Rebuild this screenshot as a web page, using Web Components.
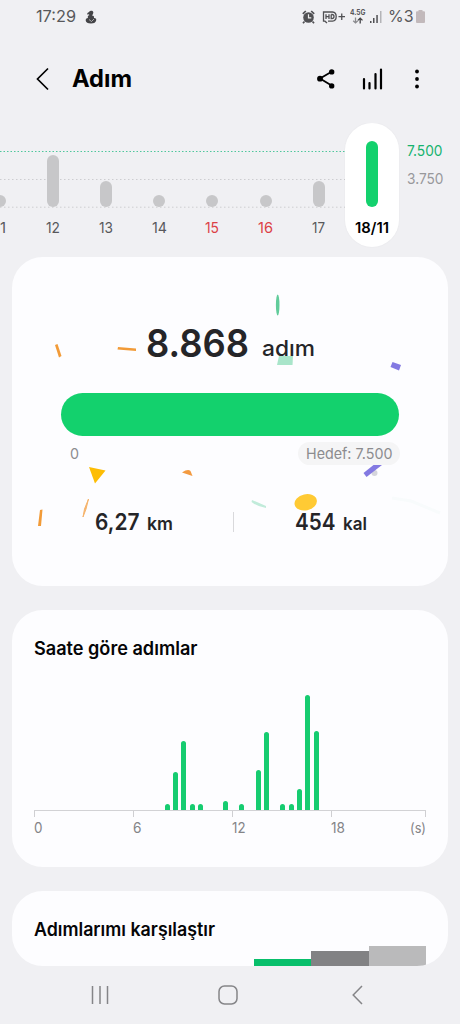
<!DOCTYPE html>
<html lang="tr">
<head>
<meta charset="utf-8">
<title>Adım</title>
<style>
html,body{margin:0;padding:0}
body{width:460px;height:1024px;overflow:hidden;background:#f0f0f3;font-family:Inter,"Noto Sans",sans-serif;color:#000}
</style>
</head>
<body>
<steps-app></steps-app>
<script>
const define = (name, html, setup) => customElements.define(name, class extends HTMLElement {
  connectedCallback() {
    if (this.shadowRoot) return;
    const root = this.attachShadow({ mode: 'open' });
    root.innerHTML = typeof html === 'function' ? html(this) : html;
    if (setup) setup(this, root);
  }
});

define('status-bar', `
<style>
:host{display:flex;height:33px;align-items:center;padding:0 35px 0 36px;box-sizing:border-box;color:#58585b;font-size:16.5px;line-height:33px}
svg{display:block;flex:none}
.gap{flex:1}
.net{display:flex;flex-direction:column;align-items:center;margin:0 4px 0 4px;width:16px}
.net b{font-size:7.5px;line-height:8px;height:8px}
</style>
<fit-text w="40">17:29</fit-text>
<svg width="12" height="14" viewBox="0 0 12 14" style="margin-left:8.500px" fill="#444447"><path d="M4 2Q5 .3 7 .8Q9 1.5 8 4L7 5.5Q9.500 5.800 9 8Q12 8 11 11Q10 13.500 6 13.500Q1 13.500 .7 10.500Q.5 8 3 8Q2 6 4.500 5L3.500 4.200L2 4.500L2.500 3Z"/><path d="M4 9.500L6.500 11.500L9 9" fill="none" stroke="#ddd" stroke-width=".7"/></svg>
<span class="gap"></span>
<svg width="13" height="14" viewBox="0 0 13 14"><circle cx="6.500" cy="7.500" r="5.300" fill="#505053"/><path d="M.8 3.800L3.800 1M12.200 3.800L9.200 1M2.500 11.500L1 13.300M10.500 11.500L12 13.300" stroke="#505053" stroke-width="1.700"/><path d="M6.500 4.300V7.800H9.300" fill="none" stroke="#eee" stroke-width="1.200"/></svg>
<svg width="24" height="14" viewBox="0 0 24 14" style="margin-left:7px" fill="none" stroke="#505053" stroke-width="1.300"><path d="M3.500 11.200H1.500V2H10.500Q14.200 2.200 14.200 6.500T10.500 11.200H6M4 4.200V9M4 6.600H7M7 4.200V9M9.200 4.500V8.700H10Q12 8.700 12 6.600T10 4.500H9.200M3 11.200L5 13M16.500 6.700H23M19.750 3.500V10"/></svg>
<div class="net"><b><fit-text w="15.500">4.5G</fit-text></b>
<svg width="12" height="7" viewBox="0 0 12 7" fill="none" stroke-width="1.300"><path d="M3.500 .5V5.500M1.200 3.700L3.500 5.900L5.800 3.700" stroke="#8b8b8e"/><path d="M8.200 6.500V1.500M5.900 3.400L8.200 1.200L10.500 3.400" stroke="#444447"/></svg></div>
<svg width="12" height="13" viewBox="0 0 12 13" fill="#505053"><path d="M0 11h1.500v2H0zM3 8h1.500v5H3zM6.300 5h1.500v8H6.300z"/><path d="M10 1h1.500v12H10z" fill="#b4b4b7"/></svg>
<fit-text w="25.500" style="margin-left:6px">%3</fit-text>
<svg width="9" height="13" viewBox="0 0 9 13" style="margin-left:3px"><path d="M2.500 0h4v1.200H8Q9 1.300 9 2.300V12Q9 13 8 13H1Q0 13 0 12V2.300Q0 1.300 1 1.200H2.500Z" fill="#c2b9bb"/></svg>
`);

define('app-header', `
<style>
:host{display:flex;height:92px;align-items:center;padding:0 40.500px 0 36px;box-sizing:border-box;font-size:24px;line-height:30px;font-weight:700}
svg{display:block;flex:none}
.gap{flex:1}
</style>
<svg width="14" height="24" viewBox="0 0 14 24" fill="none" stroke="#000" stroke-width="1.700"><path d="M12 1.500L1.500 12L12 22.500"/></svg>
<fit-text w="60" style="margin-left:22px"><slot></slot></fit-text>
<span class="gap"></span>
<svg width="18" height="20" viewBox="0 0 18 20"><path d="M15 2.500L3 9.500L15 16.800" fill="none" stroke="#000" stroke-width="1.800"/><circle cx="14.700" cy="2.900" r="2.700"/><circle cx="3" cy="9.700" r="2.900"/><circle cx="14.700" cy="16.900" r="2.700"/></svg>
<svg width="22" height="22" viewBox="0 0 22 22" style="margin-left:27.500px" stroke="#000" stroke-width="2.200" stroke-linecap="round"><path d="M2 11V20.500M7.500 15V20.500M13.500 6V20.500M19 1.500V20.500"/></svg>
<svg width="6" height="20" viewBox="0 0 6 20" style="margin-left:29.500px"><circle cx="3" cy="2.500" r="1.900"/><circle cx="3" cy="10" r="1.900"/><circle cx="3" cy="17.500" r="1.900"/></svg>
`);

define('day-bar', el => `
<style>
:host{display:flex;flex-direction:column;align-items:center;justify-content:flex-end;box-sizing:border-box;width:53.140px;height:124px;flex:none;font-size:15px;line-height:20px;color:#58585b;padding-bottom:9px}
:host([off]){color:#dc4146}
:host([sel]){background:#fff;border-radius:27px;color:#000;font-weight:600;width:54px;box-shadow:0 0 2px rgba(0,0,0,.05)}
:host([edge]) fit-text{margin-left:6px}
i{width:12px;border-radius:6px;background:#c7c7c9;height:${el.getAttribute('h')}px;margin-bottom:11px}
:host([sel]) i{background:#13d16d}
</style><i></i><fit-text w="${el.getAttribute('w') || 14}"><slot></slot></fit-text>`);

define('week-chart', `
<style>
:host{display:flex;height:132px;position:relative;overflow:hidden}
.lines{position:absolute;left:0;top:0;z-index:-1}
.days{display:flex;margin-left:-26.600px}
.goals{display:flex;flex-direction:column;gap:8px;margin:18px 0 0 8px;font-size:15px;line-height:20px;color:#98989b}
.goals :first-child{color:#16b36e}
</style>
<svg class="lines" width="346" height="124" fill="none" stroke-width="1"><path d="M0 28.500H346" stroke="#4fc79c" stroke-dasharray="1.500 2"/><path d="M0 56.500H346M0 84.200H346" stroke="#cdcdd0" stroke-dasharray="1.500 2.500"/></svg>
<div class="days">
<day-bar h="12.500" w="6" edge>1</day-bar><day-bar h="52">12</day-bar><day-bar h="26">13</day-bar><day-bar h="12.500" w="15">14</day-bar><day-bar h="12.500" off>15</day-bar><day-bar h="12.500" w="15" off>16</day-bar><day-bar h="26" w="13">17</day-bar><day-bar h="66" w="34" sel>18/11</day-bar>
</div>
<div class="goals"><fit-text w="35.500">7.500</fit-text><fit-text w="36.500">3.750</fit-text></div>
`);

define('ui-card', `
<style>
:host{display:block;box-sizing:border-box;margin:0 12px;background:#fdfdff;border-radius:31px;position:relative;z-index:0;overflow:hidden}
</style><slot></slot>`);

define('confetti-layer', `
<style>:host{position:absolute;inset:0;z-index:-1}svg{display:block}</style>
<svg width="436" height="329" viewBox="12 257 436 329">
<path d="M55 345L57.500 344L61.500 356L59 357.500Z" fill="#f29b38"/>
<path d="M118 347L136 348.500V351L117.500 349.500Z" fill="#f29b38"/>
<ellipse cx="277.700" cy="305" rx="1.800" ry="10.500" fill="#61cc9b"/>
<path d="M279 356H293L292.500 365H277Z" fill="#a9e5ca"/>
<path d="M392.500 362L401 365L399 370.500L390.500 367Z" fill="#8379e2"/>
<path d="M89 467L105.500 470.500L95 483.500Z" fill="#fdbd05"/>
<path d="M182 472.500Q188 468.500 190.500 471L192.500 476Z" fill="#f39a40"/>
<path d="M88.500 499L86 509L83 517L84.500 509Z" fill="#f5b36c" stroke="#f5b36c"/>
<path d="M40 510L42.500 509.500L41 526H38Z" fill="#f29b38"/>
<path d="M252 500L266 506V508Q257 506.500 251.500 502Z" fill="#c1ebda"/>
<ellipse cx="305.700" cy="502.300" rx="11.300" ry="8" transform="rotate(-12 305.700 502.300)" fill="#ffca34"/>
<circle cx="374.500" cy="473" r="3" fill="#d5d5dc"/>
<path d="M363.500 473L373.500 465H382L366.500 477Z" fill="#8379e2"/>
<path d="M392 498L411 501L440 513" fill="none" stroke="#f8fbfc" stroke-width="3"/>
</svg>`);

define('step-summary', `
<style>
:host{display:block;height:328.500px;color:#252528;box-sizing:border-box;padding:66px 49px 0}
.total{display:flex;height:40px;width:170px;margin-left:84.500px;align-items:flex-end}
.n{font-size:38px;line-height:40px;font-weight:600}
.u{font-size:22px;line-height:29px;font-weight:500;margin-left:13.500px}
.bar{height:43px;border-radius:22px;background:#13d16d;margin-top:30px}
.scale{display:flex;justify-content:space-between;font-size:15px;line-height:23px;color:#8c8c8f;margin-top:6px;padding-left:9px}
.goal{background:#f5f5f6;border-radius:12px;height:23px;padding:0 8px 0 7.500px;margin-right:-1px}
.stats{display:flex;align-items:center;height:30px;margin-top:42px;padding-left:34px;font-weight:600}
.stat{display:flex;align-items:flex-end;font-size:22.500px;line-height:30px;gap:7px}
.stat :last-child{font-size:17.500px;line-height:27px}
hr{width:1px;height:20px;border:0;margin:0 61px 0 60.500px;background:#d9d9dc}
</style>
<confetti-layer></confetti-layer>
<div class="total"><fit-text class="n" w="103">8.868</fit-text><fit-text class="u" w="53">adım</fit-text></div>
<div class="bar"></div>
<div class="scale"><fit-text w="9">0</fit-text><div class="goal"><fit-text w="86.500">Hedef: 7.500</fit-text></div></div>
<div class="stats"><div class="stat"><fit-text w="44.500">6,27</fit-text><fit-text w="26">km</fit-text></div><hr><div class="stat"><fit-text w="40.500">454</fit-text><fit-text w="24">kal</fit-text></div></div>
`);

define('hour-chart', `
<style>
:host{display:block;margin:30px 22px 0 21.500px}
.plot{display:grid;grid-template-columns:repeat(47,8.270px);height:120px;align-items:end;border-bottom:1px solid #d2d2d5}
i{width:5px;margin-left:-1px;border-radius:2.500px 2.500px 0 0;background:#16cc70}
.ticks,.labels{display:grid;grid-template-columns:99px 99.300px 99px 1fr}
.ticks{height:5.500px;border-right:1px solid #cfcfd2}
.ticks b{border-left:1px solid #cfcfd2}
.labels{font-size:14px;line-height:20px;color:#848487;margin-top:1.500px}
.last{display:flex;justify-content:space-between}
</style>
<div class="plot"></div>
<div class="ticks"><b></b><b></b><b></b><b></b></div>
<div class="labels"><fit-text w="8.500">0</fit-text><fit-text w="8.500">6</fit-text><fit-text w="13.500">12</fit-text><div class="last"><fit-text w="14">18</fit-text><fit-text w="16">(s)</fit-text></div></div>
`, (el, root) => {
  const steps = {16:6.5,17:38.5,18:69.5,19:6.5,20:6.5,23:9.5,25:6.5,27:40.5,28:78,30:6.5,31:6.5,32:21.5,33:115.5,34:79.5};
  root.querySelector('.plot').innerHTML = Object.entries(steps).map(([slot, h]) => `<i style="grid-row:1;grid-column:${+slot + 1};height:${h}px"></i>`).join('');
});

define('card-title', el => `
<style>:host{display:block;padding:26px 0 0 22px;font-size:18.500px;line-height:24px;font-weight:600;color:#050507}</style>
<fit-text w="${el.getAttribute('w')}"><slot></slot></fit-text>`);

define('compare-bars', `
<style>
:host{display:flex;align-items:flex-end;justify-content:flex-end;height:25px;padding-right:22px}
i{width:57.500px}
</style><i style="height:7px;background:#08bf6b"></i><i style="height:15.500px;background:#828284"></i><i style="height:20px;background:#bababb"></i>`);

define('nav-bar', `
<style>
:host{display:flex;height:58px;align-items:center;padding:0 97px 0 91px;justify-content:space-between}
svg{display:block}
.home{margin-left:-5px}
</style>
<svg width="18" height="20" viewBox="0 0 18 20" stroke="#858588" stroke-width="1.500"><path d="M1.500 1V19M9 1V19M16.500 1V19"/></svg>
<svg class="home" width="20" height="20" viewBox="0 0 20 20" fill="none" stroke="#858588" stroke-width="1.500"><rect x="1" y="1" width="18" height="18" rx="5.500"/></svg>
<svg width="11" height="20" viewBox="0 0 11 20" fill="none" stroke="#858588" stroke-width="1.500"><path d="M10 1L1.200 10L10 19"/></svg>
`);

define('steps-app', `
<style>
:host{display:flex;flex-direction:column;width:460px;height:1024px;position:relative;z-index:0}
week-chart{margin-top:-2px}
.a{height:328.500px;margin-top:2px}
.b{height:256.500px;margin-top:24.500px}
.c{height:75px;margin-top:24.500px}
</style>
<status-bar></status-bar>
<app-header>Adım</app-header>
<week-chart></week-chart>
<ui-card class="a"><step-summary></step-summary></ui-card>
<ui-card class="b"><card-title w="163.500">Saate göre adımlar</card-title><hour-chart></hour-chart></ui-card>
<ui-card class="c"><card-title w="181">Adımlarımı karşılaştır</card-title><compare-bars></compare-bars></ui-card>
<nav-bar></nav-bar>
`);

/* Condenses or widens one line of text to the width given in its w attribute. */
define('fit-text', `
<style>
:host{display:block;flex:none;white-space:nowrap}
span{display:inline-block;transform-origin:0 50%;vertical-align:top}
</style><span><slot></slot></span>`, (el, root) => {
  const span = root.querySelector('span'), w = +el.getAttribute('w');
  el.style.width = w + 'px';
  span.style.transform = `scaleX(${w / span.getBoundingClientRect().width})`;
});
</script>
</body>
</html>
